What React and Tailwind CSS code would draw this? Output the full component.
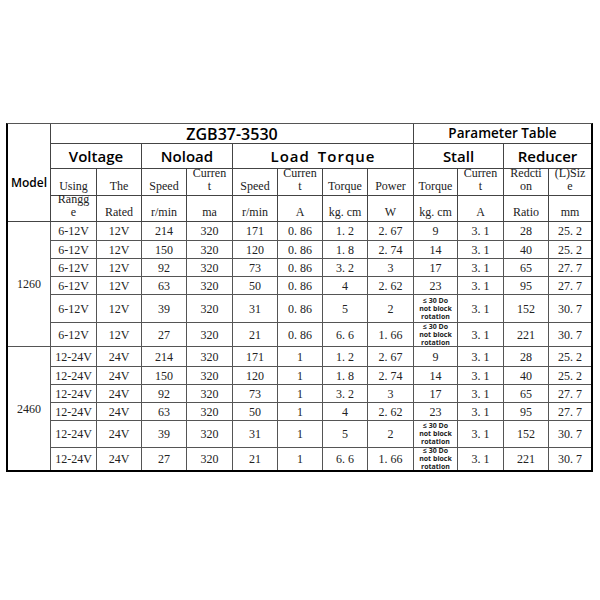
import React from "react";

const g1 = [
  ["6-12V", "12V", "214", "320", "171", "0. 86", "1. 2", "2. 67", "9", "3. 1", "28", "25. 2"],
  ["6-12V", "12V", "150", "320", "120", "0. 86", "1. 8", "2. 74", "14", "3. 1", "40", "25. 2"],
  ["6-12V", "12V", "92", "320", "73", "0. 86", "3. 2", "3", "17", "3. 1", "65", "27. 7"],
  ["6-12V", "12V", "63", "320", "50", "0. 86", "4", "2. 62", "23", "3. 1", "95", "27. 7"],
  ["6-12V", "12V", "39", "320", "31", "0. 86", "5", "2", null, "3. 1", "152", "30. 7"],
  ["6-12V", "12V", "27", "320", "21", "0. 86", "6. 6", "1. 66", null, "3. 1", "221", "30. 7"],
];

const g2 = [
  ["12-24V", "24V", "214", "320", "171", "1", "1. 2", "2. 67", "9", "3. 1", "28", "25. 2"],
  ["12-24V", "24V", "150", "320", "120", "1", "1. 8", "2. 74", "14", "3. 1", "40", "25. 2"],
  ["12-24V", "24V", "92", "320", "73", "1", "3. 2", "3", "17", "3. 1", "65", "27. 7"],
  ["12-24V", "24V", "63", "320", "50", "1", "4", "2. 62", "23", "3. 1", "95", "27. 7"],
  ["12-24V", "24V", "39", "320", "31", "1", "5", "2", null, "3. 1", "152", "30. 7"],
  ["12-24V", "24V", "27", "320", "21", "1", "6. 6", "1. 66", null, "3. 1", "221", "30. 7"],
];

const sub1 = ["Using", "The", "Speed", ["Curren", "t"], "Speed", ["Curren", "t"], "Torque", "Power", "Torque", ["Curren", "t"], ["Redcti", "on"], ["(L)Siz", "e"]];
const sub2 = [["Rangg", "e"], "Rated", "r/min", "ma", "r/min", "A", "kg. cm", "W", "kg. cm", "A", "Ratio", "mm"];

function Lines({ v }) {
  if (Array.isArray(v)) {
    return (
      <span className="leading-[13px]">
        {v[0]}
        <br />
        {v[1]}
      </span>
    );
  }
  return <span className="leading-[13px]">{v}</span>;
}

function NoBlock() {
  return (
    <div className="text-[7px] leading-[8px] font-bold text-[#222] text-center font-['Open_Sans','Noto_Sans',sans-serif]">
      ≤ 30 Do
      <br />
      not block
      <br />
      rotation
    </div>
  );
}

function Group({ model, rows, last }) {
  return (
    <>
      <div
        className={
          "row-span-6 border-r border-[#555] flex items-center justify-center text-[12px] text-[#222] font-['Liberation_Serif','DejaVu_Serif',serif] " +
          (last ? "" : "border-b")
        }
      >
        {model}
      </div>
      {rows.map((r, ri) =>
        r.map((v, ci) => (
          <div
            key={ri + "-" + ci}
            className={
              "flex items-center justify-center text-[12px] text-[#222] border-[#555] font-['Liberation_Serif','DejaVu_Serif',serif] " +
              (ci === 11 ? "" : "border-r ") +
              (last && ri === 5 ? "" : "border-b")
            }
          >
            {v === null ? <NoBlock /> : v}
          </div>
        ))
      )}
    </>
  );
}

export default function App() {
  return (
    <div className="w-[600px] h-[600px] bg-white pt-[123px] pl-[6px]">
      <div className="w-[587px] grid grid-cols-[43px_46px_45px_45px_46px_45px_45px_45px_46px_44px_46px_45px_42px] grid-rows-[20px_25px_27px_26px_19px_18px_18px_18px_28px_24px_20px_18px_18px_18px_27px_22px] border-l-2 border-r-2 border-b-2 border-black border-t border-t-[#555] font-['Open_Sans','Noto_Sans',sans-serif]">
        <div className="row-span-4 border-r border-b border-[#444] flex items-start justify-center pt-[50px] text-[12px] font-semibold text-black">
          Model
        </div>
        <div className="col-span-8 border-r border-b border-[#444] flex items-center justify-center text-[16px] font-semibold text-black leading-none">
          ZGB37-3530
        </div>
        <div className="col-span-4 border-b border-[#444] flex items-center justify-center text-[13.5px] font-semibold text-black leading-none">
          Parameter Table
        </div>

        <div className="col-span-2 border-r border-b border-[#444] flex items-center justify-center text-[15px] font-semibold text-black">
          Voltage
        </div>
        <div className="col-span-2 border-r border-b border-[#444] flex items-center justify-center text-[15px] font-semibold text-black">
          Noload
        </div>
        <div className="col-span-4 border-r border-b border-[#444] flex items-center justify-center text-[15px] font-semibold text-black tracking-[1px] [word-spacing:3px]">
          Load Torque
        </div>
        <div className="col-span-2 border-r border-b border-[#444] flex items-center justify-center text-[15px] font-semibold text-black">
          Stall
        </div>
        <div className="col-span-2 border-b border-[#444] flex items-center justify-center text-[15px] font-semibold text-black">
          Reducer
        </div>

        {sub1.map((v, i) => (
          <div
            key={"s1" + i}
            className={
              "flex items-end justify-center text-center pb-[2px] text-[12px] text-[#222] border-b border-[#444] font-['Liberation_Serif','DejaVu_Serif',serif] " +
              (i === 11 ? "" : "border-r")
            }
          >
            <Lines v={v} />
          </div>
        ))}
        {sub2.map((v, i) => (
          <div
            key={"s2" + i}
            className={
              "flex items-end justify-center text-center pb-[2px] text-[12px] text-[#222] border-b border-[#444] font-['Liberation_Serif','DejaVu_Serif',serif] " +
              (i === 11 ? "" : "border-r")
            }
          >
            <Lines v={v} />
          </div>
        ))}

        <Group model="1260" rows={g1} />
        <Group model="2460" rows={g2} last />
      </div>
    </div>
  );
}
